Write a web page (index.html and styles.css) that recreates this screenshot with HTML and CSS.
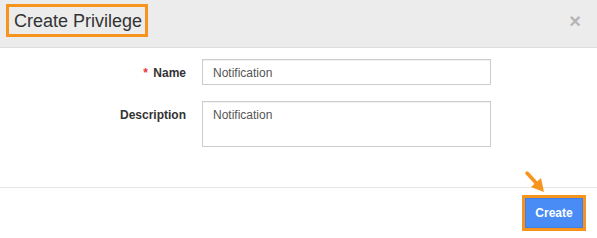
FILE: index.html
```html
<!DOCTYPE html>
<html lang="en">

<head>
    <meta charset="UTF-8">
    <title>Create Privilege</title>
    <link rel="stylesheet" href="styles.css">
</head>

<body>
    <div class="modal">
        <div class="modal-head">
            <span class="title mark">Create Privilege</span>
            <span class="close">&times;</span>
        </div>
        <div class="modal-body">
            <div class="form-row">
                <label class="form-label"><span class="req">*</span> Name</label>
                <input class="form-input" type="text" value="Notification">
            </div>
            <div class="form-row">
                <label class="form-label label-top">Description</label>
                <textarea class="form-area">Notification</textarea>
            </div>
        </div>
        <div class="modal-foot">
            <span class="btn-wrap mark">
                <button class="create-btn">Create</button>
            </span>
            <svg class="arrow" width="24" height="26" viewBox="0 0 24 26">
                <line x1="3" y1="3" x2="14" y2="15" stroke="#f7941d" stroke-width="3.5" stroke-linecap="round" />
                <polygon points="20,22 7,17 17,8" fill="#f7941d" />
            </svg>
        </div>
    </div>
</body>

</html>
```

FILE: styles.css
```css
* {
    padding: 0;
    margin: 0;
    box-sizing: border-box;
}

body {
    background: #fff;
    font-family: "Liberation Sans", Arial, sans-serif;
    color: #333;
}

.modal {
    width: 597px;
}

.mark {
    border: 3px solid #f7941d;
}

.modal-head {
    display: flex;
    justify-content: space-between;
    align-items: flex-start;
    height: 48px;
    padding: 4px 16px 0 6px;
    background-color: #ececec;
    border-bottom: 1px solid #dcdcdc;
}

.modal-head .title {
    display: inline-block;
    height: 33px;
    padding: 0 3px 0 5px;
    font-size: 18px;
    line-height: 28px;
    color: #333;
}

.modal-head .close {
    margin-top: 7px;
    font-size: 20px;
    font-weight: bold;
    line-height: 20px;
    color: #b5b5b5;
}

.modal-body {
    padding: 11px 0 40px;
}

.form-row {
    display: grid;
    grid-template-columns: 186px 289px;
    column-gap: 16px;
    align-items: center;
    margin-bottom: 16px;
}

.form-row:last-child {
    margin-bottom: 0;
}

.form-label {
    text-align: right;
    font-size: 12px;
    font-weight: bold;
    color: #333;
    padding-top: 1px;
}

.form-label .req {
    color: #e53935;
    margin-right: 2px;
}

.label-top {
    align-self: start;
    padding-top: 7px;
}

.form-input,
.form-area {
    width: 289px;
    border: 1px solid #cccccc;
    box-shadow: inset 0 1px 1px rgba(0, 0, 0, .06);
    outline: none;
    font-family: "Liberation Sans", Arial, sans-serif;
    font-size: 12px;
    color: #555;
    padding: 1px 10px 0;
}

.form-input {
    height: 26px;
}

.form-area {
    height: 46px;
    padding-top: 6px;
    resize: none;
}

.modal-foot {
    position: relative;
    display: flex;
    justify-content: flex-end;
    height: 51px;
    padding: 7px 11px 0 0;
    border-top: 1px solid #e5e5e5;
}

.btn-wrap {
    display: inline-block;
    height: 36px;
}

.create-btn {
    display: block;
    width: 58px;
    height: 30px;
    border: 1px solid #3f7fe8;
    outline: none;
    background-color: #4a8cf5;
    color: #fff;
    font-family: "Liberation Sans", Arial, sans-serif;
    font-size: 12px;
    font-weight: bold;
}

.arrow {
    position: absolute;
    left: 524px;
    top: -18px;
}
```
